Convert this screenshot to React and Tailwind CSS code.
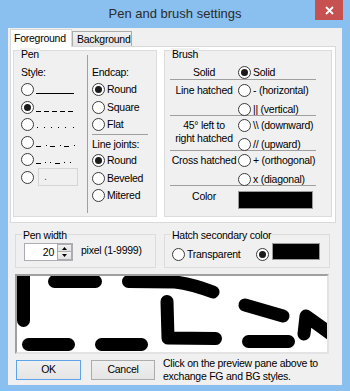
import React from 'react';

function Radio({ on }) {
  return (
    <span className="flex h-[13px] w-[13px] shrink-0 items-center justify-center rounded-full border border-[#3b3b3b] bg-white">
      {on && <span className="h-[7px] w-[7px] rounded-full bg-[#1b1b1b]" />}
    </span>
  );
}

function Opt({ on, children, className = '' }) {
  return (
    <div className={`flex items-center gap-[2px] whitespace-nowrap ${className}`}>
      <Radio on={on} />
      <span className="leading-[13px]">{children}</span>
    </div>
  );
}

function Group({ label, low, className = '', children }) {
  return (
    <div className={`relative border border-[#dcdcdc] bg-[#f0f0f0] ${className}`}>
      <span className={`absolute left-[6px] bg-[#f0f0f0] px-[1px] leading-[13px] whitespace-nowrap ${low ? 'top-[-3.5px]' : 'top-[-6px]'}`}>
        {label}
      </span>
      {children}
    </div>
  );
}

// line style samples next to the pen style radios
function Sample({ kind }) {
  const dash = (x, i) => <rect key={'d' + i} x={x} y="10" width="5" height="1" fill="#000" />;
  const dot = (x, i) => <rect key={'p' + i} x={x} y="9" width="1" height="1" fill="#000" />;
  let parts = [];
  if (kind === 0) parts = [<rect key="s" x="0" y="10" width="38" height="1" fill="#000" />];
  if (kind === 1) parts = [0, 8, 16, 24, 32].map(dash);
  if (kind === 2) parts = [1, 8, 15, 22, 29, 37].map(dot);
  if (kind === 3) parts = [...[0, 14, 28].map(dash), ...[10, 24, 38].map(dot)];
  if (kind === 4) parts = [...[0, 19].map(dash), ...[9, 14, 28, 34].map(dot)];
  return (
    <svg width="41" height="13" className="ml-[2px]">
      {parts}
    </svg>
  );
}

function Section({ label, opts, h, pt }) {
  return (
    <div className="flex border-t border-[#a0a0a0]" style={{ height: h, paddingTop: pt }}>
      <div className="w-[68px] text-center leading-[13px]">{label}</div>
      <div className="flex flex-col gap-[6px]">
        {opts.map(o => (
          <Opt key={o}>{o}</Opt>
        ))}
      </div>
    </div>
  );
}

export default function App() {
  return (
    <div className="flex h-[391px] w-[350px] flex-col bg-[#89c0ef] font-['Liberation_Sans',Arial,sans-serif] text-[10.5px] tracking-[-0.25px] text-black">
      {/* title bar */}
      <div className="relative flex h-[28px] shrink-0 items-center justify-center text-[13px] tracking-normal text-[#2b2b2b]">
        Pen and brush settings
        <div className="absolute right-[7px] top-0 flex h-[20px] w-[28px] items-center justify-center bg-[#c75050]">
          <svg width="9" height="9" viewBox="0 0 9 9">
            <path d="M1 1 L8 8 M8 1 L1 8" stroke="#fff" strokeWidth="1.8" />
          </svg>
        </div>
      </div>

      {/* client */}
      <div className="mx-[8px] h-[357px] bg-[#f0f0f0]">
        {/* tabs */}
        <div className="flex h-[18px] items-end pl-[2px]">
          <div className="relative z-10 -mb-px h-[18px] w-[62px] border border-b-0 border-[#d9d9d9] bg-white pl-[3px] pt-[2px] leading-[13px]">
            Foreground
          </div>
          <div className="h-[15px] w-[60px] border border-b-0 border-[#acacac] bg-gradient-to-b from-[#f0f0f0] to-[#e5e5e5] pl-[4px] leading-[14px]">
            Background
          </div>
        </div>

        <div className="ml-[2px] flex h-[177px] w-[326px] items-start border border-[#d9d9d9] bg-white">
          {/* Pen */}
          <Group label="Pen" low className="ml-[2px] mt-[3px] flex h-[167px] w-[144px]">
            <div className="w-[73px] pl-[7px] pt-[15px]">
              <div className="h-[13px] leading-[13px]">Style:</div>
              <div className="mt-[2px]">
                {[0, 1, 2, 3, 4, 5].map(i => (
                  <div key={i} className="flex h-[17.5px] items-center">
                    <Radio on={i === 1} />
                    {i < 5 ? (
                      <Sample kind={i} />
                    ) : (
                      <div className="ml-[4px] h-[18px] w-[40px] border border-[#d5d5d5] pl-[5px] leading-[15px] text-[#555]">.</div>
                    )}
                  </div>
                ))}
              </div>
            </div>
            <div className="mt-[4px] h-[158px] w-px bg-[#a0a0a0]" />
            <div className="pl-[4px] pt-[15px]">
              <div className="h-[13px] leading-[13px]">Endcap:</div>
              <div className="mt-[2px]">
                {['Round', 'Square', 'Flat'].map((t, i) => (
                  <Opt key={t} on={i === 0} className="h-[17.5px]">{t}</Opt>
                ))}
              </div>
              <div className="mt-[0.5px] w-[56px] border-t border-[#a0a0a0]" />
              <div className="mt-[3px] h-[13px] leading-[13px]">Line joints:</div>
              <div className="mt-[1px]">
                {['Round', 'Beveled', 'Mitered'].map((t, i) => (
                  <Opt key={t} on={i === 0} className="h-[17.5px]">{t}</Opt>
                ))}
              </div>
            </div>
          </Group>

          {/* Brush */}
          <Group label="Brush" low className="ml-[7px] mt-[3px] h-[167px] w-[168px]">
            <div className="ml-[5px] w-[146px] pt-[15px]">
              <div className="flex h-[13px]">
                <div className="w-[68px] text-center leading-[13px]">Solid</div>
                <Opt on>Solid</Opt>
              </div>
              <Section label="Line hatched" opts={['- (horizontal)', '|| (vertical)']} h={36} pt={3.5} />
              <Section label={<>45° left to<br />right hatched</>} opts={['\\\\ (downward)', '//  (upward)']} h={35} pt={2.5} />
              <Section label="Cross hatched" opts={['+ (orthogonal)', 'x (diagonal)']} h={35} pt={2.5} />
              <div className="flex border-t border-[#a0a0a0]">
                <div className="w-[68px] pt-[3.5px] text-center leading-[13px]">Color</div>
                <div className="mt-[5px] h-[18px] w-[75px] border border-[#9a9a9a] bg-black" />
              </div>
            </div>
          </Group>
        </div>

        {/* pen width + hatch colour */}
        <div className="mt-[11px] flex">
          <Group label="Pen width" className="ml-[7px] h-[34px] w-[141px]">
            <div className="flex items-start pl-[8px] pt-[8px]">
              <div className="flex h-[18px] w-[49px] border border-[#abadb3] bg-white">
                <div className="flex-1 pr-[3px] text-right leading-[16px]">20</div>
                <div className="flex w-[15px] flex-col">
                  <div className="flex h-[8px] items-center justify-center border border-[#acacac] bg-gradient-to-b from-[#f2f2f2] to-[#e2e2e2]">
                    <svg width="5" height="3"><path d="M0 3 L2.5 0 L5 3 Z" fill="#000" /></svg>
                  </div>
                  <div className="flex h-[8px] items-center justify-center border border-t-0 border-[#acacac] bg-gradient-to-b from-[#f2f2f2] to-[#e2e2e2]">
                    <svg width="5" height="3"><path d="M0 0 L2.5 3 L5 0 Z" fill="#000" /></svg>
                  </div>
                </div>
              </div>
              <div className="ml-[8px] mt-[1px] leading-[13px]">pixel (1-9999)</div>
            </div>
          </Group>
          <Group label="Hatch secondary color" className="ml-[8px] h-[34px] w-[166px]">
            <div className="flex items-start pl-[7px] pt-[8px]">
              <div className="mt-[5px] w-[84px]">
                <Opt>Transparent</Opt>
              </div>
              <div className="mt-[5px]">
                <Radio on />
              </div>
              <div className="ml-[3px] h-[17px] w-[48px] border border-[#9a9a9a] bg-black" />
            </div>
          </Group>
        </div>

        {/* preview */}
        <div className="ml-[7px] mt-[6px] h-[80px] w-[314px] overflow-hidden border-2 border-b-[#e3e3e3] border-l-[#a0a0a0] border-r-[#e3e3e3] border-t-[#a0a0a0] bg-white">
          <svg width="310" height="76" fill="none" stroke="#000" strokeWidth="13" strokeLinecap="round" strokeLinejoin="round">
            <path d="M6.5 -10 L6.5 44.5" />
            <path d="M37.5 5.5 L78.5 5.5" />
            <path d="M111.5 5.5 L158 6 Q175 8 196 16" />
            <path d="M150 25.5 L151 62 L198.5 62.5" />
            <path d="M228 29 L266 40" />
            <path d="M287 58 L289 40 L314 58" />
            <path d="M11.5 68.5 L51.5 68.5" />
            <path d="M84.5 68.5 L124.5 68.5" />
            <path d="M231.5 65.5 L271.5 65.5" />
          </svg>
        </div>

        {/* buttons */}
        <div className="mt-[2.5px] flex items-start">
          <div className="ml-[8px] mt-[3.5px] flex h-[20px] w-[65px] items-center justify-center border border-[#5fa4e8] bg-gradient-to-b from-[#f0f0f0] to-[#e5e5e5]">OK</div>
          <div className="ml-[10px] mt-[3.5px] flex h-[20px] w-[64px] items-center justify-center border border-[#acacac] bg-gradient-to-b from-[#f0f0f0] to-[#e5e5e5]">Cancel</div>
          <div className="ml-[8px] leading-[13px]">
            Click on the preview pane above to
            <br />
            exchange FG and BG styles.
          </div>
        </div>
      </div>
    </div>
  );
}
